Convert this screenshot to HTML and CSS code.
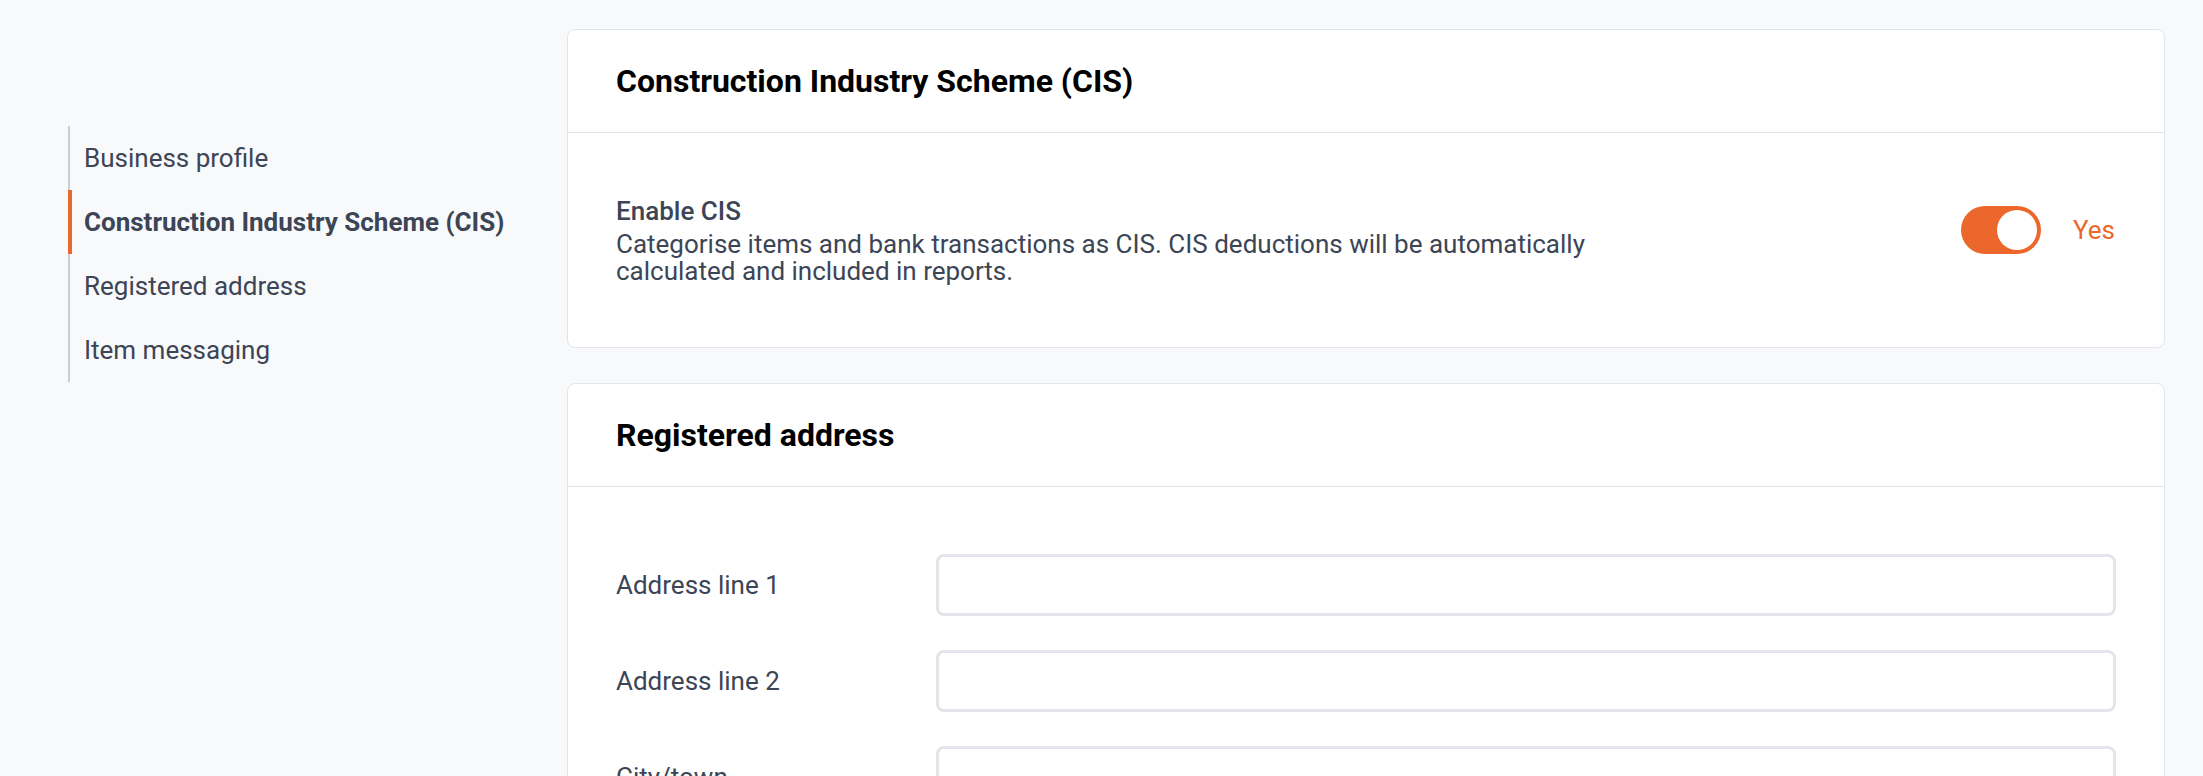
FILE: index.html
```html
<!DOCTYPE html>
<html lang="en">
<head>
<meta charset="utf-8">
<title>Settings</title>
<link rel="stylesheet" href="styles.css">
</head>
<body>
<div class="page">
  <nav class="sidenav">
    <a class="nav-item">Business profile</a>
    <a class="nav-item active">Construction Industry Scheme (CIS)</a>
    <a class="nav-item">Registered address</a>
    <a class="nav-item">Item messaging</a>
  </nav>
  <main class="content">
    <section class="card">
      <header class="card-header"><h2>Construction Industry Scheme (CIS)</h2></header>
      <div class="card-body cis-body">
        <div class="cis-text">
          <div class="cis-title">Enable CIS</div>
          <p class="cis-desc">Categorise items and bank transactions as CIS. CIS deductions will be automatically calculated and included in reports.</p>
        </div>
        <div class="toggle-group">
          <span class="toggle on"><span class="knob"></span></span>
          <span class="toggle-label">Yes</span>
        </div>
      </div>
    </section>
    <section class="card">
      <header class="card-header"><h2>Registered address</h2></header>
      <div class="card-body form-body">
        <div class="form-row"><label class="form-label">Address line 1</label><span class="input"></span></div>
        <div class="form-row"><label class="form-label">Address line 2</label><span class="input"></span></div>
        <div class="form-row"><label class="form-label">City/town</label><span class="input"></span></div>
        <div class="form-row"><label class="form-label">County</label><span class="input"></span></div>
        <div class="form-row"><label class="form-label">Postcode</label><span class="input"></span></div>
      </div>
    </section>
  </main>
</div>
</body>
</html>
```

FILE: styles.css
```css
* { box-sizing: border-box; }
html, body { margin: 0; padding: 0; }
body {
  background: #f8f9fb;
  font-family: Roboto, "Liberation Sans", sans-serif;
  color: #3c4555;
  font-size: 26px;
}
.page {
  display: grid;
  grid-template-columns: 499px 1598px;
  padding: 29px 0 0 68px;
  align-items: start;
}
.sidenav {
  margin-top: 97px;
  display: flex;
  flex-direction: column;
}
.nav-item {
  display: flex;
  align-items: center;
  height: 64px;
  border-left: 2px solid #c9cdd4;
  padding-left: 14px;
  color: #3c4555;
  font-size: 26px;
  white-space: nowrap;
}
.nav-item.active {
  border-left: 4px solid #ec672c;
  padding-left: 12px;
  font-weight: 700;
}
.content {
  display: flex;
  flex-direction: column;
  gap: 35px;
}
.card {
  background: #fff;
  border: 1px solid #e1e4e9;
  border-radius: 8px;
}
.card-header {
  height: 103px;
  display: flex;
  align-items: center;
  padding: 0 48px;
  border-bottom: 1px solid #e1e4e9;
}
.card-header h2 {
  margin: 0;
  font-size: 32px;
  font-weight: 700;
  color: #000;
}
.card-body { padding: 0 48px; }
.cis-body {
  display: flex;
  justify-content: space-between;
  padding-top: 63px;
  padding-bottom: 62px;
}
.cis-text { max-width: 1040px; }
.cis-title {
  font-weight: 500;
  line-height: 30px;
  margin-bottom: 5px;
}
.cis-desc {
  margin: 0;
  line-height: 27px;
}
.toggle-group {
  display: flex;
  align-items: center;
  gap: 32px;
  margin-top: 10px;
  margin-right: 1px;
  align-self: flex-start;
}
.toggle {
  width: 80px;
  height: 48px;
  border-radius: 24px;
  background: #ec672c;
  display: flex;
  align-items: center;
  justify-content: flex-end;
  padding: 4px;
}
.knob {
  width: 40px;
  height: 40px;
  border-radius: 50%;
  background: #fff;
}
.toggle-label {
  color: #ec672c;
  line-height: 30px;
}
.form-body {
  padding-top: 67px;
  padding-bottom: 60px;
  display: flex;
  flex-direction: column;
  gap: 34px;
}
.form-row {
  display: grid;
  grid-template-columns: 320px 1fr;
  align-items: center;
}
.form-label { color: #3c4555; }
.input {
  display: block;
  height: 62px;
  border: 3px solid #e3e5ea;
  border-radius: 8px;
  background: #fff;
}
```
